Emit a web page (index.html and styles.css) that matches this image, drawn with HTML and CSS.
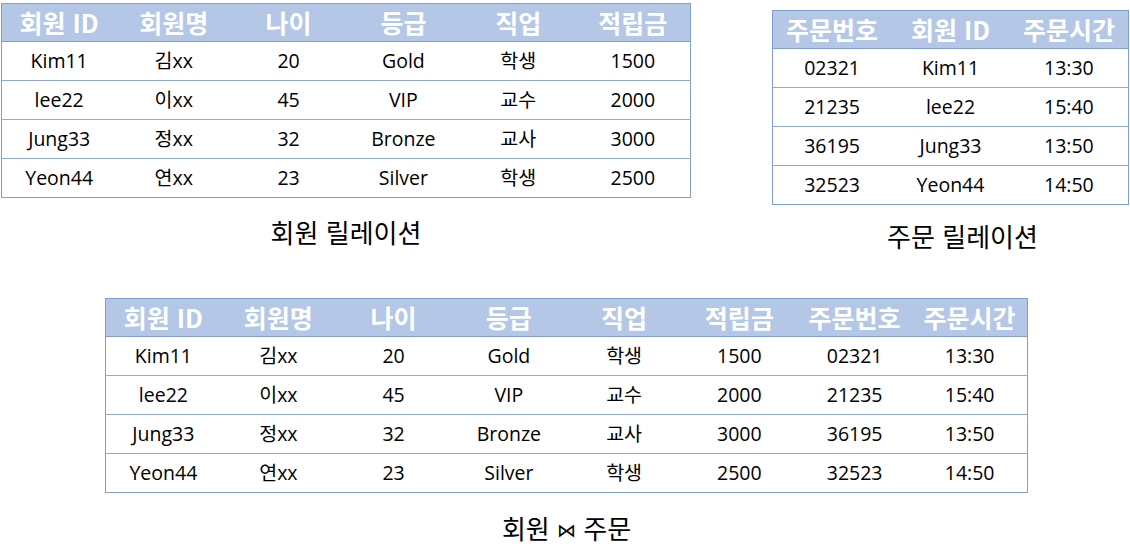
FILE: index.html
```html
<!DOCTYPE html>
<html lang="ko">
<head>
<meta charset="utf-8">
<title>릴레이션 조인</title>
<link rel="stylesheet" href="styles.css">
</head>
<body>
<main class="page">
  <section class="top">
    <figure class="rel rel-member">
      <table class="tbl">
        <colgroup><col><col><col><col><col><col></colgroup>
        <thead>
          <tr><th>회원 ID</th><th>회원명</th><th>나이</th><th>등급</th><th>직업</th><th>적립금</th></tr>
        </thead>
        <tbody>
          <tr><td>Kim11</td><td>김xx</td><td>20</td><td>Gold</td><td>학생</td><td>1500</td></tr>
          <tr><td>lee22</td><td>이xx</td><td>45</td><td>VIP</td><td>교수</td><td>2000</td></tr>
          <tr><td>Jung33</td><td>정xx</td><td>32</td><td>Bronze</td><td>교사</td><td>3000</td></tr>
          <tr><td>Yeon44</td><td>연xx</td><td>23</td><td>Silver</td><td>학생</td><td>2500</td></tr>
        </tbody>
      </table>
      <figcaption class="cap cap-member">회원 릴레이션</figcaption>
    </figure>
    <figure class="rel rel-order">
      <table class="tbl">
        <colgroup><col><col><col></colgroup>
        <thead>
          <tr><th>주문번호</th><th>회원 ID</th><th>주문시간</th></tr>
        </thead>
        <tbody>
          <tr><td>02321</td><td>Kim11</td><td>13:30</td></tr>
          <tr><td>21235</td><td>lee22</td><td>15:40</td></tr>
          <tr><td>36195</td><td>Jung33</td><td>13:50</td></tr>
          <tr><td>32523</td><td>Yeon44</td><td>14:50</td></tr>
        </tbody>
      </table>
      <figcaption class="cap cap-order">주문 릴레이션</figcaption>
    </figure>
  </section>
  <figure class="rel rel-join">
    <table class="tbl">
      <colgroup><col><col><col><col><col><col><col><col></colgroup>
      <thead>
        <tr><th>회원 ID</th><th>회원명</th><th>나이</th><th>등급</th><th>직업</th><th>적립금</th><th>주문번호</th><th>주문시간</th></tr>
      </thead>
      <tbody>
        <tr><td>Kim11</td><td>김xx</td><td>20</td><td>Gold</td><td>학생</td><td>1500</td><td>02321</td><td>13:30</td></tr>
        <tr><td>lee22</td><td>이xx</td><td>45</td><td>VIP</td><td>교수</td><td>2000</td><td>21235</td><td>15:40</td></tr>
        <tr><td>Jung33</td><td>정xx</td><td>32</td><td>Bronze</td><td>교사</td><td>3000</td><td>36195</td><td>13:50</td></tr>
        <tr><td>Yeon44</td><td>연xx</td><td>23</td><td>Silver</td><td>학생</td><td>2500</td><td>32523</td><td>14:50</td></tr>
      </tbody>
    </table>
    <figcaption class="cap cap-join">회원 <span class="bowtie">⋈</span> 주문</figcaption>
  </figure>
</main>
</body>
</html>
```

FILE: styles.css
```css
* { box-sizing: border-box; }

html, body {
  margin: 0;
  padding: 0;
  background: #ffffff;
}

body {
  font-family: "Open Sans", "Noto Sans CJK KR", sans-serif;
  color: #000000;
  width: 1130px;
  height: 559px;
  overflow: hidden;
}

.page {
  display: flex;
  flex-direction: column;
}

.top {
  display: flex;
  align-items: flex-start;
  padding-left: 1px;
}

.rel {
  margin: 0;
  display: flex;
  flex-direction: column;
}

.rel-member {
  width: 690px;
  padding-top: 3px;
}

.rel-order {
  width: 357px;
  margin-left: 81px;
  padding-top: 10px;
}

.rel-join {
  width: 923px;
  margin-left: 105px;
  margin-top: 49px;
}

.tbl {
  width: 100%;
  border-collapse: collapse;
  table-layout: fixed;
  border: 1.5px solid #7f9ed9;
}

.tbl th {
  background: #b4c7e7;
  color: #ffffff;
  font-family: "Noto Sans CJK KR", "Open Sans", sans-serif;
  font-weight: 700;
  font-size: 25px;
  height: 38px;
  padding: 0;
  line-height: 1;
  text-align: center;
  vertical-align: middle;
  border-bottom: 1.5px solid #7f9ed9;
  white-space: nowrap;
}

.tbl td {
  height: 39px;
  padding: 0;
  font-size: 19.5px;
  line-height: 1;
  text-align: center;
  vertical-align: middle;
  border-top: 1px solid #8eaadc;
  white-space: nowrap;
}

.cap {
  font-family: "Noto Sans CJK KR", sans-serif;
  font-size: 26px;
  line-height: 1;
  text-align: center;
}

.cap-member { margin-top: 21px; }
.cap-order { margin-top: 18px; padding-left: 24px; }
.cap-join { margin-top: 22px; }

.bowtie {
  font-family: "DejaVu Sans", sans-serif;
  font-size: 19px;
  vertical-align: 2px;
}
```
